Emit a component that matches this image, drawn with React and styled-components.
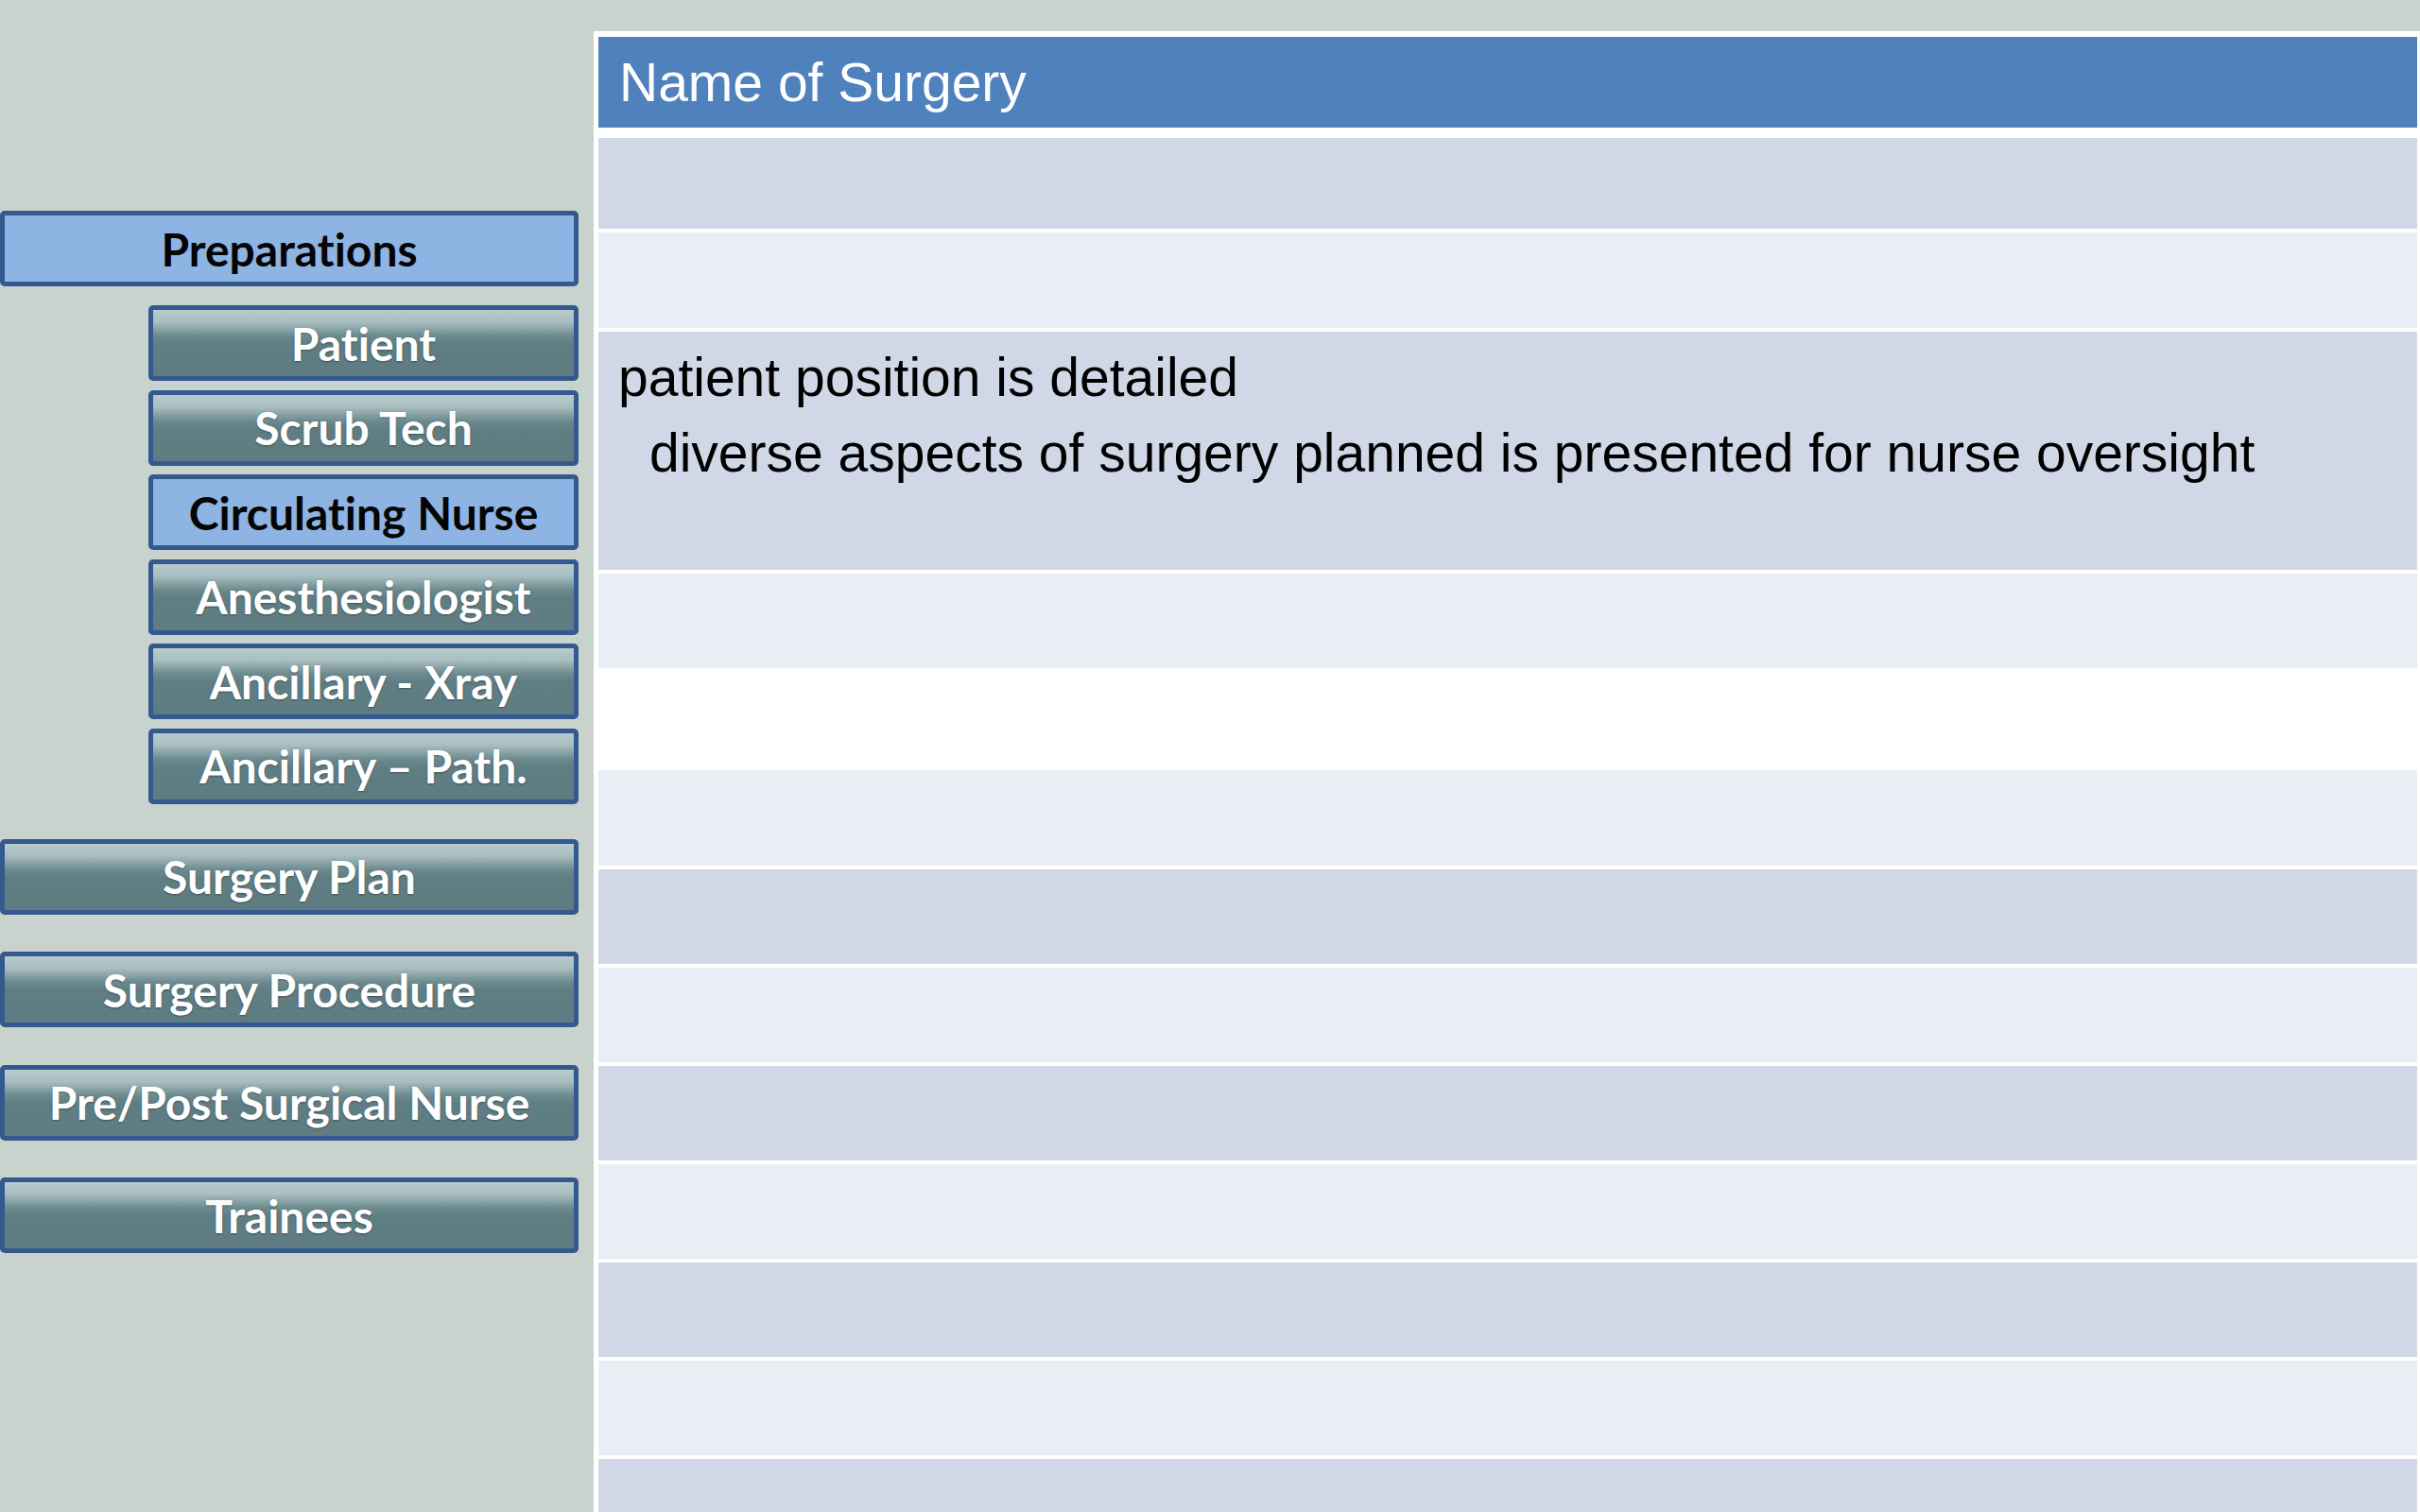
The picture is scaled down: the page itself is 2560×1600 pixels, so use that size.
import React from 'react';
import styled, { createGlobalStyle, css } from 'styled-components';

const GlobalStyle = createGlobalStyle`
  html, body {
    margin: 0;
    padding: 0;
    background: #c9d3cd;
  }
  body {
    width: 2560px;
    height: 1600px;
    overflow: hidden;
    font-family: "Liberation Sans", Arial, sans-serif;
  }
`;

const Page = styled.div`
  display: flex;
  width: 2560px;
  height: 1600px;
  background: #c9d3cd;
  overflow: hidden;
`;

const Sidebar = styled.nav`
  flex: none;
  width: 628px;
  box-sizing: border-box;
  padding-top: 223px;
  display: flex;
  flex-direction: column;
`;

const SubList = styled.div`
  display: flex;
  flex-direction: column;
  gap: 9.6px;
  margin-top: 20px;
  padding-left: 157px;
`;

const MainList = styled.div`
  display: flex;
  flex-direction: column;
  gap: 39.5px;
  margin-top: 37px;
`;

const NavButton = styled.div`
  box-sizing: border-box;
  width: ${(p) => (p.$sub ? 455 : 612)}px;
  height: 80px;
  border: 5px solid #34598f;
  border-radius: 5px;
  display: flex;
  align-items: center;
  justify-content: center;
  font-family: "Lato", "Open Sans", sans-serif;
  font-weight: 700;
  font-size: 48px;
  font-variant-ligatures: none;
  white-space: nowrap;
  ${(p) =>
    p.$active
      ? css`
          background: #8eb4e3;
          color: #050505;
        `
      : css`
          background: linear-gradient(
            to bottom,
            #b8cacc 0%,
            #a9bec1 18%,
            #8ea8ab 27%,
            #6a888d 40%,
            #5f7e83 52%,
            #5e7c81 100%
          );
          color: #ffffff;
          text-shadow: 0 1px 2px rgba(0, 0, 0, 0.35);
        `}
`;

const Table = styled.section`
  flex: 1;
  margin-top: 33px;
  background: #ffffff;
  padding: 6px 3px 0 5px;
  display: flex;
  flex-direction: column;
  gap: 4px;
  overflow: hidden;
`;

const HeaderCell = styled.div`
  flex: none;
  height: 96px;
  margin-bottom: 7px;
  background: #4f81bd;
  color: #ffffff;
  font-size: 57px;
  line-height: 96px;
  padding-left: 22px;
  white-space: nowrap;
`;

const toneColors = {
  dark: '#d0d8e8',
  light: '#e9edf4',
  white: '#ffffff',
};

const Row = styled.div`
  flex: none;
  height: ${(p) => p.$h}px;
  background: ${(p) => toneColors[p.$tone]};
  box-sizing: border-box;
  padding: 8px 0 0 21px;
  color: #000000;
  font-size: 57px;
  line-height: 80px;
`;

const Line = styled.div`
  padding-left: ${(p) => (p.$indent ? 33 : 0)}px;
  white-space: nowrap;
`;

const subItems = [
  { label: 'Patient' },
  { label: 'Scrub Tech' },
  { label: 'Circulating Nurse', active: true },
  { label: 'Anesthesiologist' },
  { label: 'Ancillary - Xray' },
  { label: 'Ancillary \u2013 Path.' },
];

const mainItems = ['Surgery Plan', 'Surgery Procedure', 'Pre/Post Surgical Nurse', 'Trainees'];

const rows = [
  { tone: 'dark', h: 96 },
  { tone: 'light', h: 101 },
  {
    tone: 'dark',
    h: 252,
    lines: [
      { text: 'patient position is detailed' },
      { text: 'diverse aspects of surgery planned is presented for nurse oversight', indent: true },
    ],
  },
  { tone: 'light', h: 100 },
  { tone: 'white', h: 100 },
  { tone: 'light', h: 101 },
  { tone: 'dark', h: 100 },
  { tone: 'light', h: 100 },
  { tone: 'dark', h: 100 },
  { tone: 'light', h: 100 },
  { tone: 'dark', h: 100 },
  { tone: 'light', h: 100 },
  { tone: 'dark', h: 100 },
];

export default function App() {
  return (
    <>
      <GlobalStyle />
      <Page>
        <Sidebar>
          <NavButton $active>Preparations</NavButton>
          <SubList>
            {subItems.map((it) => (
              <NavButton key={it.label} $sub $active={it.active}>
                {it.label}
              </NavButton>
            ))}
          </SubList>
          <MainList>
            {mainItems.map((label) => (
              <NavButton key={label}>{label}</NavButton>
            ))}
          </MainList>
        </Sidebar>
        <Table>
          <HeaderCell>Name of Surgery</HeaderCell>
          {rows.map((r, i) => (
            <Row key={i} $tone={r.tone} $h={r.h}>
              {r.lines &&
                r.lines.map((l, j) => (
                  <Line key={j} $indent={l.indent}>
                    {l.text}
                  </Line>
                ))}
            </Row>
          ))}
        </Table>
      </Page>
    </>
  );
}
